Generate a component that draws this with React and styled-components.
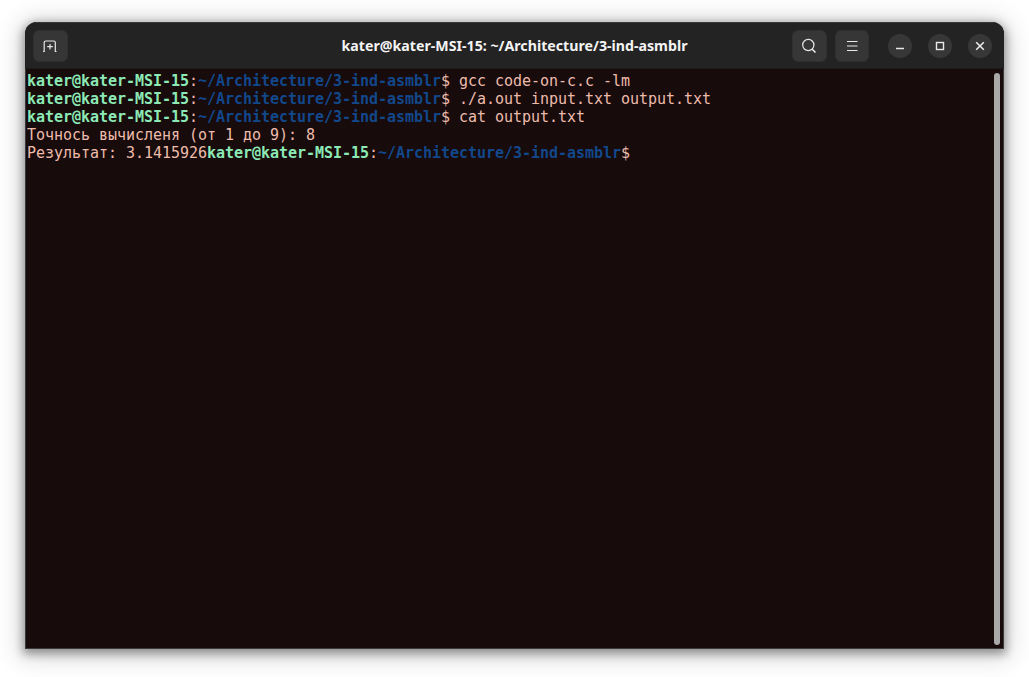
import React from "react";
import styled, { createGlobalStyle } from "styled-components";

const Global = createGlobalStyle`
  html, body { margin: 0; padding: 0; background: #ffffff; }
  #root { width: 1029px; height: 677px; overflow: hidden; }
`;

const Page = styled.div`
  box-sizing: border-box;
  width: 1029px;
  height: 677px;
  padding: 22px 25px 28px 25px;
  background: #ffffff;
`;

const Window = styled.div`
  box-sizing: border-box;
  width: 979px;
  height: 627px;
  display: flex;
  flex-direction: column;
  border-radius: 12px 12px 0 0;
  overflow: hidden;
  background: #170b0b;
  box-shadow: 0 3px 10px 2px rgba(0, 0, 0, 0.36), 0 3px 24px 6px rgba(0, 0, 0, 0.16);
`;

const Header = styled.header`
  box-sizing: border-box;
  height: 47px;
  flex: none;
  display: grid;
  grid-template-columns: 1fr auto 1fr;
  align-items: center;
  padding: 0 8px;
  background: #232323;
  border-top: 1px solid #3a3a3a;
  border-bottom: 1px solid #1c1c1c;
`;

const Title = styled.div`
  text-align: center;
  color: #f4f4f4;
  font: 700 14.2px "Noto Sans", sans-serif;
  white-space: nowrap;
`;

const Group = styled.div`
  display: flex;
  align-items: center;
  gap: ${(p) => p.$gap}px;
  margin-left: ${(p) => p.$left || 0}px;
`;

const RightControls = styled.div`
  display: flex;
  align-items: center;
  justify-self: end;
  margin-right: 4px;
`;

const SquareButton = styled.div`
  box-sizing: border-box;
  width: 34.5px;
  height: 32px;
  display: flex;
  align-items: center;
  justify-content: center;
  border-radius: 6px;
  background: #363636;
  border: 1px solid #303030;
`;

const RoundButton = styled.div`
  width: 24px;
  height: 24px;
  display: flex;
  align-items: center;
  justify-content: center;
  border-radius: 50%;
  background: #373737;
`;

const Body = styled.main`
  flex: 1;
  min-height: 0;
  display: flex;
  background: #170b0b;
  border-left: 1px solid #3a3a3a;
  border-right: 1px solid #3a3a3a;
  border-bottom: 1px solid #3a3a3a;
`;

const Output = styled.pre`
  flex: 1;
  margin: 0;
  padding: 3px 0 0 1px;
  font: 400 15px/18px "DejaVu Sans Mono", monospace;
  letter-spacing: -0.03px;
  color: #eebbab;
`;

const Host = styled.span`
  color: #8ce9b6;
  font-weight: 700;
`;

const Colon = styled.span`
  color: #eebbab;
`;

const Path = styled.span`
  color: #12488b;
  font-weight: 700;
`;

const ScrollThumb = styled.div`
  flex: none;
  width: 6px;
  margin: 4px 3px 3px 0;
  border-radius: 3px;
  background: #a9a9a9;
`;

const stroke = { fill: "none", stroke: "#e8e8e8", strokeWidth: 1.2 };

const Prompt = () => (
  <>
    <Host>kater@kater-MSI-15</Host>
    <Colon>:</Colon>
    <Path>~/Architecture/3-ind-asmblr</Path>$
  </>
);

export default function App() {
  return (
    <Page>
      <Global />
      <Window>
        <Header>
          <SquareButton>
            <svg width="16" height="16" viewBox="0 0 16 16" {...stroke}>
              <path d="M1 13.5h1.2V4.5A1.5 1.5 0 0 1 3.7 3h8.1a1.5 1.5 0 0 1 1.5 1.5v9h1.2" />
              <path d="M8 6v5.5M5.2 8.7h5.6" />
            </svg>
          </SquareButton>
          <Title>kater@kater-MSI-15: ~/Architecture/3-ind-asmblr</Title>
          <RightControls>
            <Group $gap={8}>
              <SquareButton>
                <svg width="16" height="16" viewBox="0 0 16 16" {...stroke}>
                  <circle cx="7.3" cy="7" r="5.6" />
                  <path d="M11.2 11.2l3.3 3.3" strokeWidth="1.6" />
                </svg>
              </SquareButton>
              <SquareButton>
                <svg width="16" height="16" viewBox="0 0 16 16" {...stroke}>
                  <path d="M3 3.5h10.5M3 8h10.5M3 12.5h10.5" />
                </svg>
              </SquareButton>
            </Group>
            <Group $gap={16} $left={19}>
              <RoundButton>
                <svg width="12" height="12" viewBox="0 0 12 12" {...stroke}>
                  <path d="M2 8.5h8" strokeWidth="1.4" />
                </svg>
              </RoundButton>
              <RoundButton>
                <svg width="12" height="12" viewBox="0 0 12 12" {...stroke}>
                  <rect x="2.5" y="2.5" width="7" height="7" strokeWidth="1.4" />
                </svg>
              </RoundButton>
              <RoundButton>
                <svg width="12" height="12" viewBox="0 0 12 12" {...stroke}>
                  <path d="M2.2 2.2l7.6 7.6M9.8 2.2l-7.6 7.6" strokeWidth="1.6" />
                </svg>
              </RoundButton>
            </Group>
          </RightControls>
        </Header>
        <Body>
          <Output>
            <Prompt /> gcc code-on-c.c -lm{"\n"}
            <Prompt /> ./a.out input.txt output.txt{"\n"}
            <Prompt /> cat output.txt{"\n"}
            Точнось вычисленя (от 1 до 9): 8{"\n"}
            Результат: 3.1415926<Prompt />
          </Output>
          <ScrollThumb />
        </Body>
      </Window>
    </Page>
  );
}
